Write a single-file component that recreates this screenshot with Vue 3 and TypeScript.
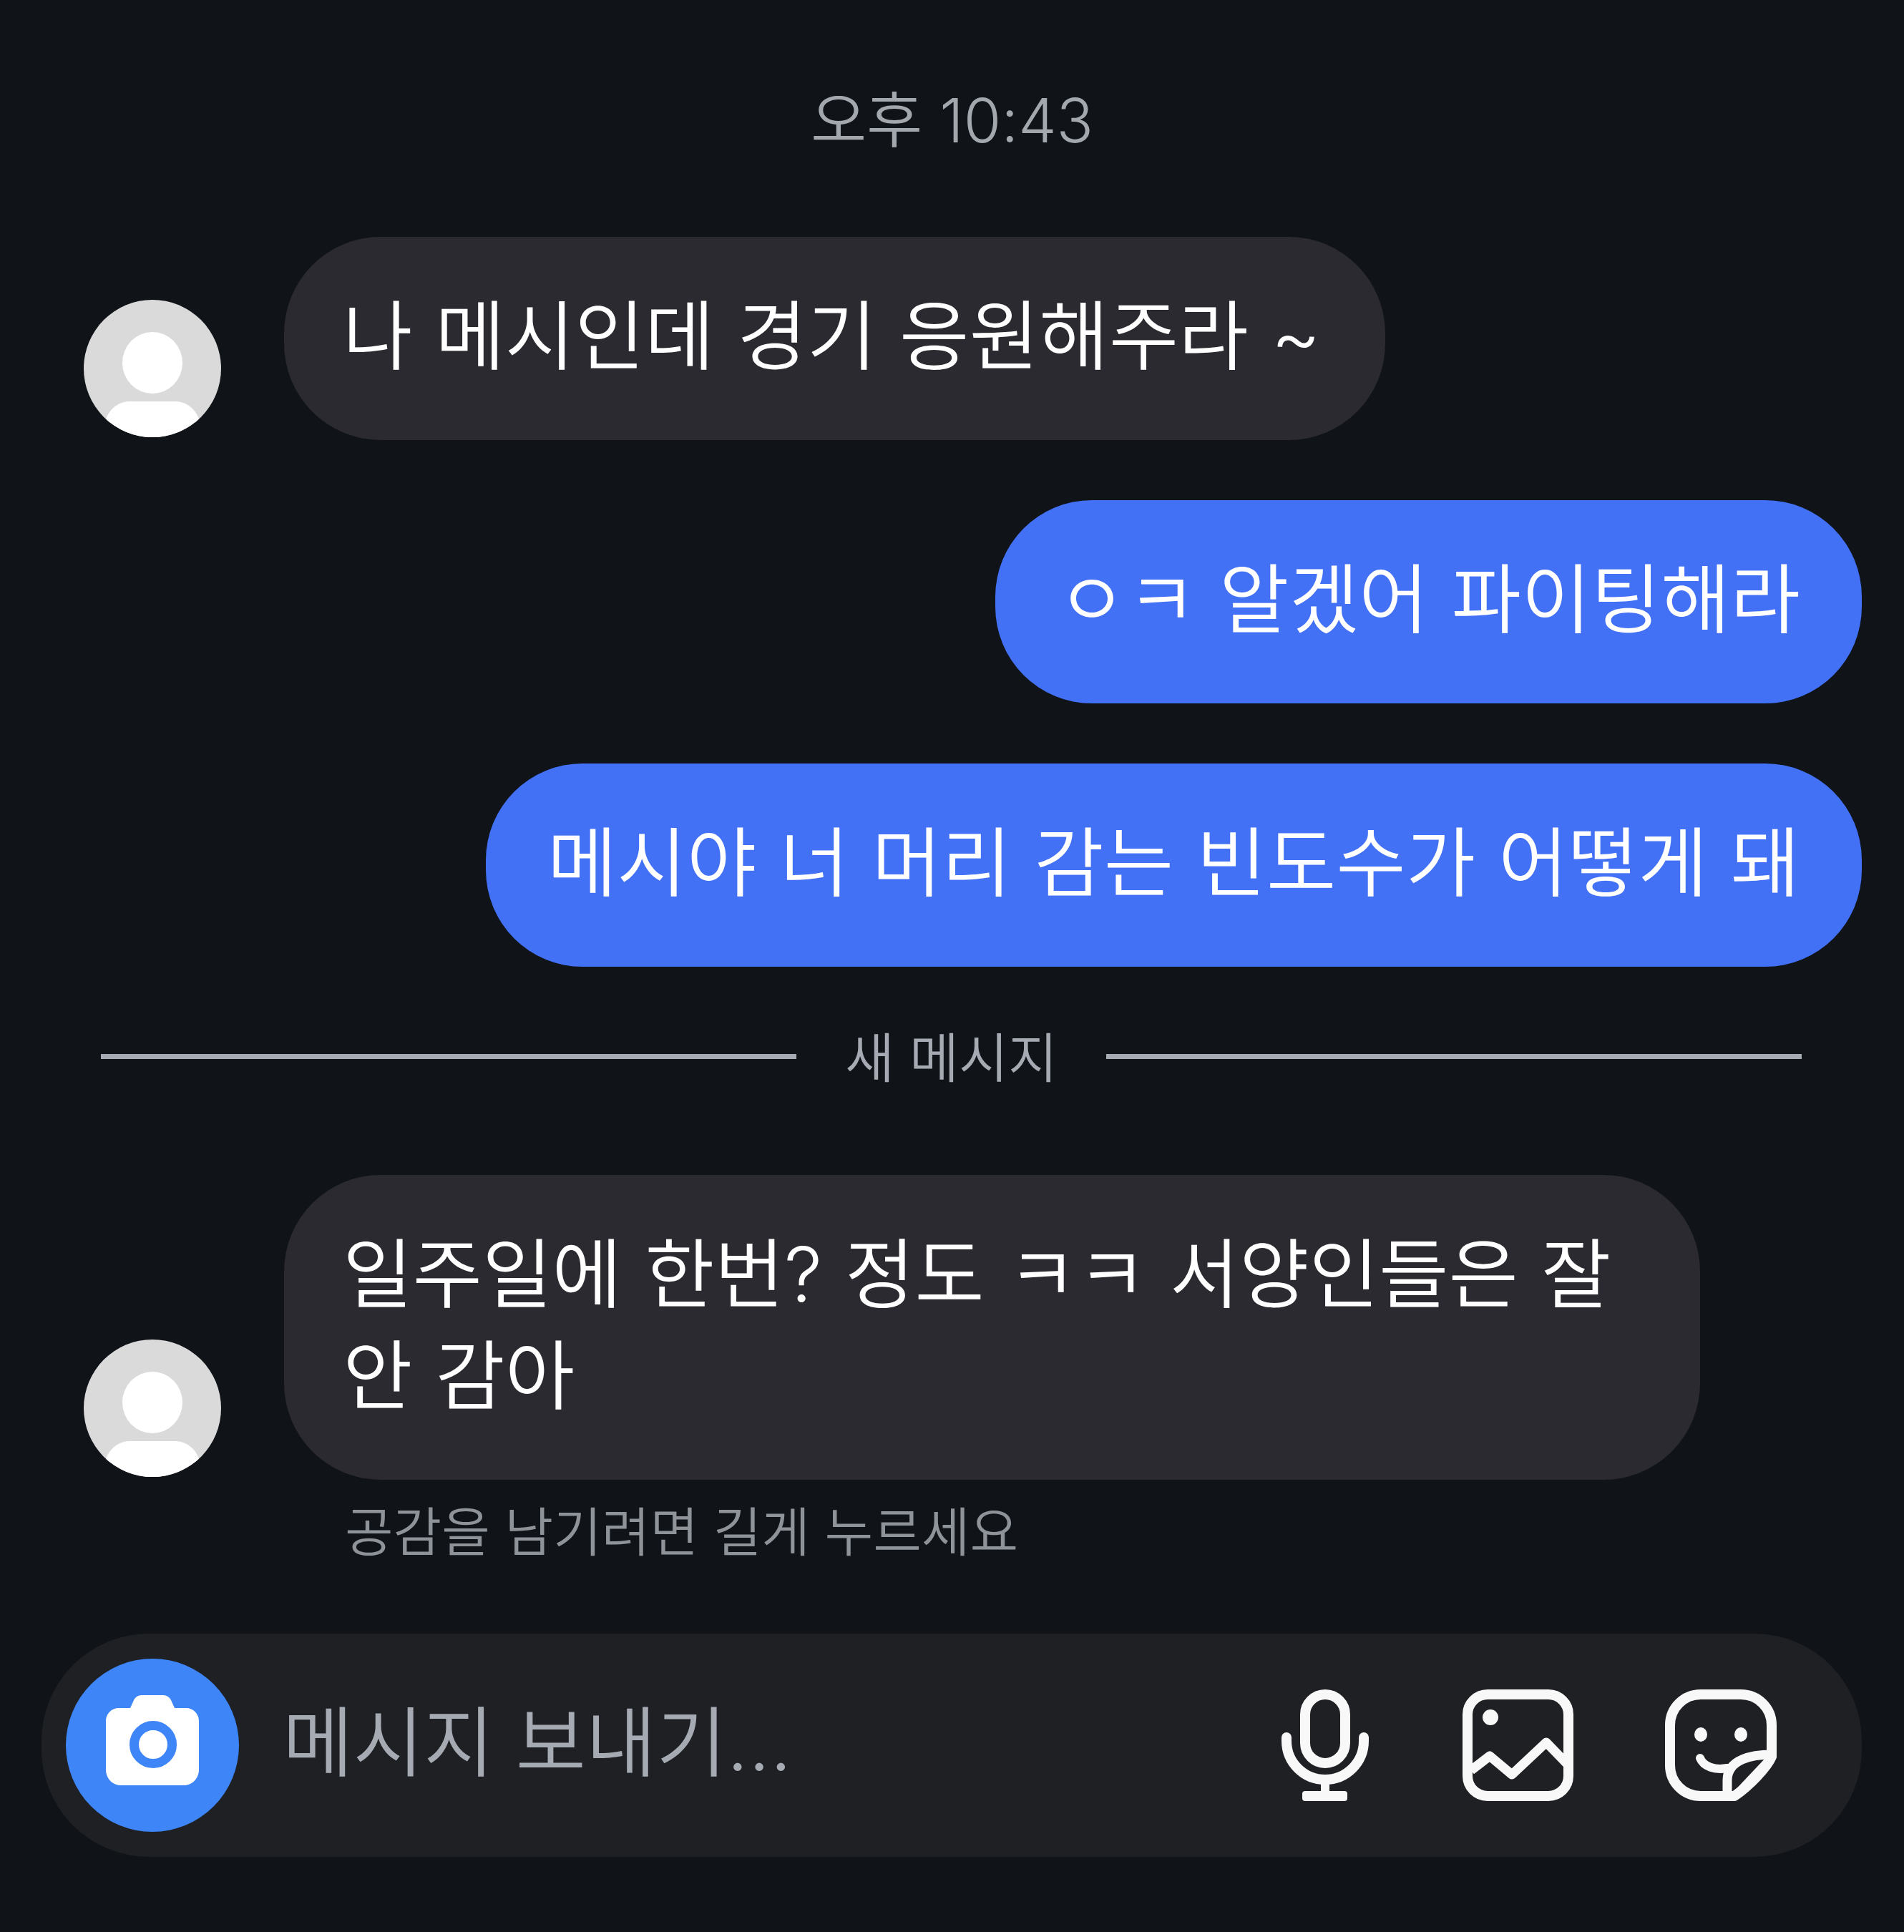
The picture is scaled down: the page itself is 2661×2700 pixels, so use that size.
<template>
  <div class="chat">
    <div class="time">오후 10:43</div>

    <div class="row incoming first">
      <svg class="avatar" viewBox="0 0 192 192">
        <defs>
          <clipPath id="avatar-clip"><circle cx="96" cy="96" r="96" /></clipPath>
        </defs>
        <g clip-path="url(#avatar-clip)">
          <rect width="192" height="192" fill="#dadada" />
          <ellipse cx="96" cy="88" rx="42" ry="43" fill="#fff" />
          <path d="M64 142h64c16 0 30 12 34 28v22H30v-22c4-16 18-28 34-28z" fill="#fff" />
        </g>
      </svg>
      <div class="bubble gray">나 메시인데 경기 응원해주라 ~</div>
    </div>

    <div class="row outgoing">
      <div class="bubble blue">ㅇㅋ 알겠어 파이팅해라</div>
    </div>

    <div class="row outgoing">
      <div class="bubble blue">메시야 너 머리 감는 빈도수가 어떻게 돼</div>
    </div>

    <div class="divider">
      <span class="line"></span>
      <span class="label">새 메시지</span>
      <span class="line"></span>
    </div>

    <div class="row incoming">
      <svg class="avatar" viewBox="0 0 192 192">
        <g clip-path="url(#avatar-clip)">
          <rect width="192" height="192" fill="#dadada" />
          <ellipse cx="96" cy="88" rx="42" ry="43" fill="#fff" />
          <path d="M64 142h64c16 0 30 12 34 28v22H30v-22c4-16 18-28 34-28z" fill="#fff" />
        </g>
      </svg>
      <div class="bubble gray wide">일주일에 한번? 정도 ㅋㅋ 서양인들은 잘 안 감아</div>
    </div>

    <div class="hint">공감을 남기려면 길게 누르세요</div>

    <div class="composer">
      <div class="camera">
        <svg width="130" height="126" viewBox="0 0 130 126">
          <path
            d="M18 18h16l5-11c2-4 6-7 11-7h30c5 0 9 3 11 7l5 11h16c10 0 18 8 18 18v68c0 12-9 22-21 22H21C9 126 0 116 0 104V36c0-10 8-18 18-18z"
            fill="#fff"
          />
          <circle cx="66" cy="69" r="26.5" fill="none" stroke="#3e85f7" stroke-width="13" />
        </svg>
      </div>
      <div class="placeholder">메시지 보내기...</div>
      <div class="actions">
        <svg class="mic" width="122" height="156" viewBox="0 0 122 156" fill="none" stroke="#f8f8f8">
          <rect x="33" y="7" width="56" height="96" rx="28" stroke-width="14" />
          <path d="M7 67v5a54 54 0 0 0 108 0v-5" stroke-width="14" stroke-linecap="round" />
          <path d="M61 130v14" stroke-width="12" />
          <rect x="29" y="142" width="63" height="14" rx="4" fill="#f8f8f8" stroke="none" />
        </svg>
        <svg width="155" height="156" viewBox="0 0 155 156" fill="none" stroke="#f8f8f8">
          <rect x="7" y="7" width="141" height="142" rx="28" stroke-width="14" />
          <ellipse cx="39" cy="39" rx="11" ry="11" fill="#f8f8f8" stroke="none" />
          <path d="M12 113l26-20 31 26 48-45 31 32" stroke-width="13" stroke-linejoin="round" />
        </svg>
        <svg width="156" height="156" viewBox="0 0 156 156" fill="none" stroke="#f8f8f8">
          <path
            d="M50 7h56c24 0 43 19 43 43v44c-6 14-30 40-52 55H50c-24 0-43-19-43-43V50C7 26 26 7 50 7z"
            stroke-width="14"
            stroke-linejoin="round"
          />
          <path d="M149 91c-26 0-62 6-62 36v22" stroke-width="13" />
          <path d="M149 94l-52 55" stroke-width="10" />
          <ellipse cx="50" cy="63" rx="9" ry="10" fill="#f8f8f8" stroke="none" />
          <ellipse cx="106" cy="63" rx="9" ry="10" fill="#f8f8f8" stroke="none" />
          <path d="M49 96c5 12 20 17 38 14" stroke-width="12" stroke-linecap="round" />
        </svg>
      </div>
    </div>
  </div>
</template>

<script setup lang="ts">
// static chat capture, nothing to wire up
</script>

<style>
html,
body {
  background: #101418;
}
</style>

<style scoped>
.chat {
  width: 2661px;
  height: 2700px;
  background: #101418;
  color: #fff;
  font-family: "Inter", "Noto Sans CJK KR", sans-serif;
  font-weight: 350;
  overflow: hidden;
  padding-top: 112px;
  box-sizing: border-box;
}
.time {
  height: 114px;
  line-height: 114px;
  text-align: center;
  font-size: 85px;
  color: #a3a7ae;
}
.row {
  display: flex;
  margin-top: 84px;
}
.row.first {
  margin-top: 105px;
}
.incoming {
  align-items: flex-end;
  gap: 88px;
  padding-left: 117px;
}
.outgoing {
  justify-content: flex-end;
  padding-right: 59px;
}
.avatar {
  width: 192px;
  height: 192px;
  flex: none;
  margin-bottom: 4px;
}
.bubble {
  box-sizing: border-box;
  padding: 68px 86px 74px;
  line-height: 142px;
  font-size: 106px;
  word-spacing: 2px;
  border-radius: 135px;
}
.gray {
  background: #2a2a30;
  padding-left: 82px;
  padding-right: 90px;
}
.blue {
  background: #4371f5;
}
.wide {
  width: 1979px;
}
.divider {
  display: flex;
  align-items: center;
  gap: 68px;
  padding: 0 143px 0 141px;
  margin-top: 60px;
  height: 130px;
}
.line {
  flex: 1;
  height: 7px;
  background: #a6aab3;
}
.label {
  font-size: 75px;
  color: #a6aab3;
  padding-bottom: 5px;
}
.divider + .row {
  margin-top: 101px;
}
.hint {
  margin-top: 33px;
  padding-left: 482px;
  height: 82px;
  line-height: 82px;
  font-size: 73.5px;
  color: #8e9299;
}
.composer {
  display: flex;
  align-items: center;
  box-sizing: border-box;
  height: 312px;
  margin-top: 100px;
  margin-left: 58px;
  margin-right: 59px;
  padding-left: 34px;
  padding-right: 119px;
  border-radius: 150px;
  background: #1e2024;
}
.camera {
  display: flex;
  align-items: center;
  justify-content: center;
  box-sizing: border-box;
  width: 242px;
  height: 242px;
  padding-bottom: 14px;
  flex: none;
  border-radius: 50%;
  background: #3e85f7;
}
.placeholder {
  flex: 1;
  margin-left: 61px;
  padding-bottom: 24px;
  font-size: 107px;
  color: #a6aab3;
}
.actions {
  display: flex;
  align-items: center;
  gap: 128px;
}
.mic {
  margin-right: 3px;
}
</style>
